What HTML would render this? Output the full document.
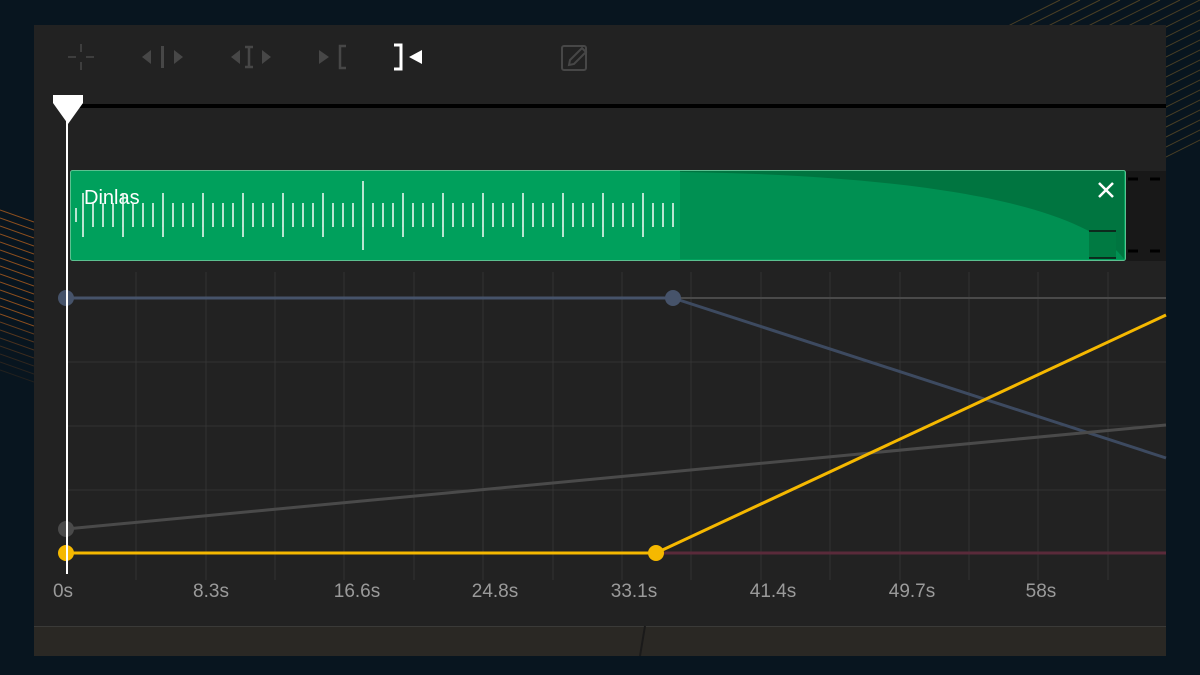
<!DOCTYPE html>
<html><head><meta charset="utf-8"><style>
html,body{margin:0;padding:0;background:#08151f;width:1200px;height:675px;overflow:hidden;font-family:"Liberation Sans",sans-serif}
svg{position:absolute;left:0;top:0}
</style></head><body>
<svg width="1200" height="675" viewBox="0 0 1200 675">
<defs>
<clipPath id="tr"><rect x="1000" y="0" width="200" height="260"/></clipPath>
<clipPath id="lf"><rect x="0" y="200" width="34" height="230"/></clipPath>
</defs>
<g clip-path="url(#tr)" stroke="#7a5e28" stroke-width="1" opacity="0.6">
<line x1="1000" y1="30" x2="1060" y2="0"/><line x1="1000" y1="40" x2="1080" y2="0"/><line x1="1000" y1="50" x2="1100" y2="0"/><line x1="1000" y1="60" x2="1120" y2="0"/><line x1="1000" y1="70" x2="1140" y2="0"/><line x1="1000" y1="80" x2="1160" y2="0"/><line x1="1000" y1="90" x2="1180" y2="0"/><line x1="1000" y1="100" x2="1200" y2="0"/><line x1="1000" y1="110" x2="1220" y2="0"/><line x1="1000" y1="120" x2="1240" y2="0"/><line x1="1000" y1="130" x2="1260" y2="0"/><line x1="1000" y1="140" x2="1280" y2="0"/><line x1="1000" y1="150" x2="1300" y2="0"/><line x1="1000" y1="160" x2="1320" y2="0"/><line x1="1000" y1="170" x2="1340" y2="0"/><line x1="1000" y1="180" x2="1360" y2="0"/><line x1="1000" y1="190" x2="1380" y2="0"/><line x1="1000" y1="200" x2="1400" y2="0"/><line x1="1000" y1="210" x2="1420" y2="0"/><line x1="1000" y1="220" x2="1440" y2="0"/><line x1="1000" y1="230" x2="1460" y2="0"/><line x1="1000" y1="240" x2="1480" y2="0"/>
</g>
<g clip-path="url(#lf)" stroke="#b8621e" stroke-width="1" opacity="0.75">
<line x1="0" y1="210" x2="34" y2="222"/><line x1="0" y1="218" x2="34" y2="230"/><line x1="0" y1="226" x2="34" y2="238"/><line x1="0" y1="234" x2="34" y2="246"/><line x1="0" y1="242" x2="34" y2="254"/><line x1="0" y1="250" x2="34" y2="262"/><line x1="0" y1="258" x2="34" y2="270"/><line x1="0" y1="266" x2="34" y2="278"/><line x1="0" y1="274" x2="34" y2="286"/><line x1="0" y1="282" x2="34" y2="294"/><line x1="0" y1="290" x2="34" y2="302"/><line x1="0" y1="298" x2="34" y2="310"/><line x1="0" y1="306" x2="34" y2="318"/><line x1="0" y1="314" x2="34" y2="326"/><line x1="0" y1="322" x2="34" y2="334" opacity=".7"/><line x1="0" y1="330" x2="34" y2="342" opacity=".6"/><line x1="0" y1="338" x2="34" y2="350" opacity=".5"/><line x1="0" y1="346" x2="34" y2="358" opacity=".4"/><line x1="0" y1="354" x2="34" y2="366" opacity=".3"/><line x1="0" y1="362" x2="34" y2="374" opacity=".25"/><line x1="0" y1="370" x2="34" y2="382" opacity=".2"/>
</g>
<rect x="34" y="25" width="1132" height="631" fill="#222222"/>
<rect x="34" y="626" width="1132" height="30" fill="#2a2824"/>
<line x1="34" y1="626.5" x2="1166" y2="626.5" stroke="#3a3a38"/>
<line x1="645" y1="626" x2="640" y2="656" stroke="#1a1a1a" stroke-width="2"/>
<g fill="#474747" stroke="#474747">
<g stroke-width="1.5"><line x1="81" y1="44" x2="81" y2="70"/><line x1="68" y1="57" x2="94" y2="57"/></g>
<rect x="76" y="52" width="10" height="10" fill="#222" stroke="none"/>
<polygon points="151,50 151,64 142,57" stroke="none"/><rect x="161" y="46" width="3" height="22" stroke="none"/><polygon points="174,50 174,64 183,57" stroke="none"/>
<polygon points="240,50 240,64 231,57" stroke="none"/><path d="M245 47h8M245 67h8M249 47v20" fill="none" stroke-width="2.5"/><polygon points="262,50 262,64 271,57" stroke="none"/>
<polygon points="319,50 319,64 329,57" stroke="none"/><path d="M346 46h-6v22h6" fill="none" stroke-width="2.5"/>
<rect x="562" y="46" width="24" height="24" rx="2" fill="none" stroke-width="2"/>
<path d="M569 65l1-5 12-12 4 4-12 12z" fill="#222" stroke-width="2"/>
</g>
<path d="M394 45h7v24h-7" fill="none" stroke="#fff" stroke-width="3"/>
<polygon points="422,50 422,64 409,57" fill="#fff"/>
<rect x="68" y="104" width="1098" height="4" fill="#000"/>
<g stroke="#333" stroke-width="1">
<line x1="66" y1="362" x2="1166" y2="362"/><line x1="66" y1="426" x2="1166" y2="426"/><line x1="66" y1="490" x2="1166" y2="490"/>
<line x1="136" y1="272" x2="136" y2="580"/><line x1="206" y1="272" x2="206" y2="580"/><line x1="275" y1="272" x2="275" y2="580"/><line x1="344" y1="272" x2="344" y2="580"/><line x1="414" y1="272" x2="414" y2="580"/><line x1="483" y1="272" x2="483" y2="580"/><line x1="553" y1="272" x2="553" y2="580"/><line x1="622" y1="272" x2="622" y2="580"/><line x1="691" y1="272" x2="691" y2="580"/><line x1="761" y1="272" x2="761" y2="580"/><line x1="830" y1="272" x2="830" y2="580"/><line x1="900" y1="272" x2="900" y2="580"/><line x1="969" y1="272" x2="969" y2="580"/><line x1="1038" y1="272" x2="1038" y2="580"/><line x1="1108" y1="272" x2="1108" y2="580"/>
</g>
<rect x="1125" y="171" width="41" height="90" fill="#181818"/>
<path d="M1128 179h10M1150 179h10M1128 251h10M1150 251h10" stroke="#000" stroke-width="3"/>
<rect x="70.5" y="170.5" width="1055" height="90" rx="2" fill="#00a05c" stroke="#5cc090"/>
<path d="M680 171H1124V259H680Z" fill="#007540"/>
<path d="M680 172C900 175 1080 200 1124 259H680Z" fill="#009052"/>
<path d="M1089 231h27v27h-27z" fill="#007a42"/>
<path d="M1089 231h27M1089 258h27" stroke="#111" stroke-width="1.5"/>
<path d="M1099 183l14 14M1113 183l-14 14" stroke="#fff" stroke-width="2.5"/>
<text x="84" y="204" fill="#fff" font-size="20">Dinlas</text>
<g stroke="#e8f6ee" stroke-width="1.6" id="ticks"></g>
<line x1="66" y1="298" x2="673" y2="298" stroke="#46536a" stroke-width="3"/>
<line x1="673" y1="298" x2="1166" y2="298" stroke="#4a4a4a" stroke-width="2"/>
<line x1="673" y1="298" x2="1166" y2="458" stroke="#3d4a60" stroke-width="3"/>
<line x1="66" y1="529" x2="1166" y2="425" stroke="#4a4a4a" stroke-width="3"/>
<line x1="656" y1="553" x2="1166" y2="553" stroke="#5a2a3a" stroke-width="3"/>
<line x1="66" y1="553" x2="656" y2="553" stroke="#f5b800" stroke-width="3"/>
<line x1="656" y1="553" x2="1166" y2="315" stroke="#f5b800" stroke-width="3"/>
<circle cx="66" cy="298" r="8" fill="#46536a"/>
<circle cx="673" cy="298" r="8" fill="#46536a"/>
<circle cx="66" cy="529" r="8" fill="#4a4a4a"/>
<circle cx="66" cy="553" r="8" fill="#f5b800"/>
<circle cx="656" cy="553" r="8" fill="#f5b800"/>
<line x1="67" y1="100" x2="67" y2="574" stroke="#fff" stroke-width="2"/>
<path d="M53 95h30v8l-15 21l-15-21z" fill="#fff"/>
<g fill="#9a9a9a" font-size="19" text-anchor="middle">
<text x="63" y="597">0s</text><text x="211" y="597">8.3s</text><text x="357" y="597">16.6s</text><text x="495" y="597">24.8s</text><text x="634" y="597">33.1s</text><text x="773" y="597">41.4s</text><text x="912" y="597">49.7s</text><text x="1041" y="597">58s</text>
</g>
</svg>
<script>
var g=document.getElementById('ticks'),s='';
s+='<line x1="76" y1="208" x2="76" y2="222"/><line x1="83" y1="193" x2="83" y2="237"/>';
for(var x=83;x<680;x+=10){var k=Math.round((x-83)/10)%4;var y1,y2;
 if(k==0&&x>83){y1=193;y2=237}else if(k!=0){y1=203;y2=227}else continue;
 if(Math.abs(x-363)<2){y1=181;y2=250}
 s+='<line x1="'+x+'" y1="'+y1+'" x2="'+x+'" y2="'+y2+'"/>';}
g.innerHTML=s;
</script>
</body></html>
